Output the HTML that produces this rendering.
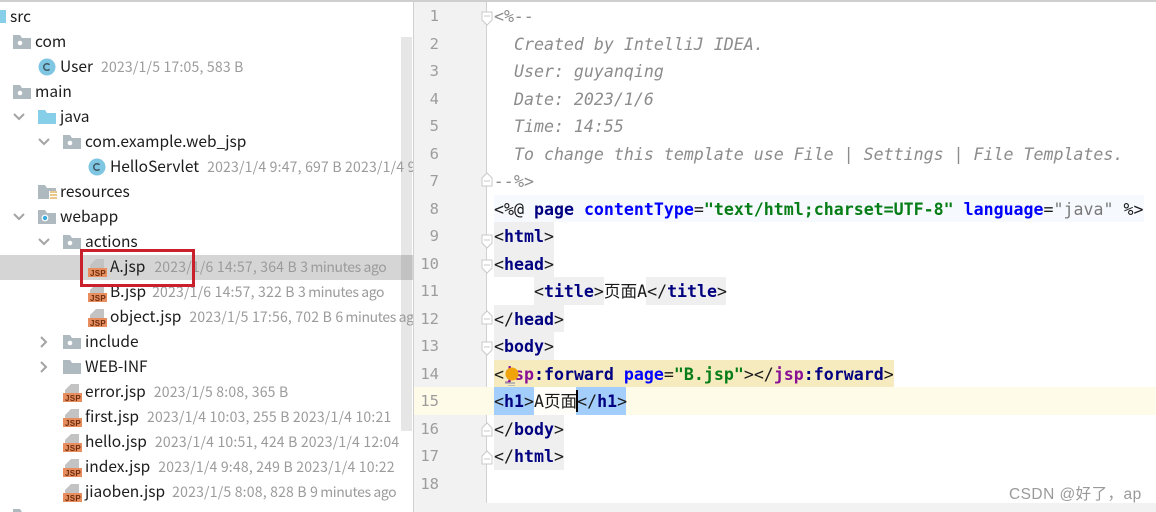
<!DOCTYPE html>
<html lang="zh">
<head>
<meta charset="utf-8">
<title>A.jsp</title>
<style>
html,body{margin:0;padding:0;background:#fff}
body{position:relative;width:1156px;height:512px;overflow:hidden}
.b{position:absolute}
.r{position:absolute;height:25px;line-height:25px;white-space:nowrap;font-family:"Noto Sans CJK SC","Liberation Sans",sans-serif;font-size:15.5px;color:#1c1c1c}
.r i{font-style:normal;color:#9b9b9b;font-size:14px;letter-spacing:.2px;margin-left:8px}
.r i u{text-decoration:none;letter-spacing:-.4px}
.ic{position:absolute}
.l{position:absolute;left:494px;height:27.5px;line-height:27.5px;white-space:pre;font-family:"DejaVu Sans Mono","Noto Sans CJK SC",monospace;font-size:16.6px;color:#1a1a1a}
.n{position:absolute;left:414px;width:25px;text-align:right;height:27.5px;line-height:27.5px;font-family:"DejaVu Sans Mono",monospace;font-size:15.5px;color:#9d9d9d}
.c{font-style:italic;color:#8c8c8c}
.t{color:#000080;font-weight:bold}
.a{color:#0000ff;font-weight:bold}
.s{color:#067d17;font-weight:bold}
.q{color:#7a7a7a}
.p{color:#871094;font-weight:bold}
</style>
</head>
<body>
<!-- panels -->
<div class="b" style="left:0;top:0;width:1156px;height:2px;background:#cfcfcf"></div>
<div class="b" style="left:401px;top:37px;width:11px;height:394px;background:#e6e6e6"></div>
<div class="b" style="left:413px;top:2px;width:1px;height:510px;background:#d0d0d0"></div>
<div class="b" style="left:414px;top:2px;width:72px;height:510px;background:#f2f2f2"></div>
<div class="b" style="left:486px;top:2px;width:1px;height:502px;background:#d0d0d0"></div>
<div class="b" style="left:414px;top:503px;width:742px;height:9px;background:#f2f2f2"></div>
<div class="b" style="left:0;top:255px;width:413px;height:25px;background:#d5d5d5"></div>
<div class="b" style="left:401px;top:255px;width:11px;height:25px;background:#c2c2c2"></div>

<!-- tree icons -->
<svg class="ic" style="left:0;top:0" width="413" height="512" viewBox="0 0 413 512">
  <!-- src -->
  <path d="M0 10h6v13H0z" fill="#87cfe8"/>
  <!-- package folders -->
  <g fill="#afb9c0">
    <path d="M13 35h7l2 3h9v11H13z"/>
    <path d="M13 85h7l2 3h9v11H13z"/>
    <path d="M63 135h7l2 3h9v11H63z"/>
    <path d="M63 235h7l2 3h9v11H63z"/>
    <path d="M63 335h7l2 3h9v11H63z"/>
    <path d="M63 360h7l2 3h9v11H63z"/>
    <path d="M38 185h7l2 3h9v11H38z"/>
    <path d="M38 210h7l2 3h9v11H38z"/>
  </g>
  <g fill="#fff">
    <circle cx="20" cy="43" r="2.3"/><circle cx="20" cy="93" r="2.3"/>
    <circle cx="70" cy="143" r="2.3"/><circle cx="70" cy="243" r="2.3"/><circle cx="70" cy="343" r="2.3"/>
  </g>
  <path d="M38 110h7l2 3h9v11H38z" fill="#87cfe8"/>
  <circle cx="45" cy="218" r="3.4" fill="#fff"/><circle cx="45" cy="218" r="2.2" fill="#3aa9dc"/>
  <path d="M49 191h8v9h-8z" fill="#fff"/>
  <path d="M50 192h7M50 195h7M50 198h7" stroke="#e3b564" stroke-width="1.6"/>
  <!-- classes -->
  <circle cx="47" cy="67" r="8.5" fill="#7fc6e2"/>
  <circle cx="97" cy="167" r="8.5" fill="#7fc6e2"/>
  <path d="M49.500 64.800a3.300 3.300 0 1 0 0 4.400M99.500 164.800a3.300 3.300 0 1 0 0 4.400" fill="none" stroke="#3f5560" stroke-width="1.500"/>
  <!-- chevrons -->
  <g fill="none" stroke="#a3a3a3" stroke-width="2">
    <path d="M14 114l5 5 5-5M14 214l5 5 5-5M39 139l5 5 5-5M39 239l5 5 5-5"/>
    <path d="M41 337l5 5-5 5M41 362l5 5-5 5"/>
  </g>
  <!-- jsp file sheets -->
  <g fill="#c3c3c3">
    <path d="M96 259h8v11H90v-5z"/><path d="M96 284h8v11H90v-5z"/><path d="M96 309h8v11H90v-5z"/>
    <path d="M71 384h8v11H65v-5z"/><path d="M71 409h8v11H65v-5z"/><path d="M71 434h8v11H65v-5z"/><path d="M71 459h8v11H65v-5z"/><path d="M71 484h8v11H65v-5z"/>
  </g>
  <g fill="#e88d5e">
    <rect x="88" y="268" width="19" height="9"/><rect x="88" y="293" width="19" height="9"/><rect x="88" y="318" width="19" height="9"/>
    <rect x="63" y="393" width="19" height="9"/><rect x="63" y="418" width="19" height="9"/><rect x="63" y="443" width="19" height="9"/><rect x="63" y="468" width="19" height="9"/><rect x="63" y="493" width="19" height="9"/>
  </g>
  <g font-family="Liberation Sans, sans-serif" font-size="8" font-weight="bold" fill="#6b2f10" letter-spacing=".3">
    <text x="90" y="276">JSP</text><text x="90" y="301">JSP</text><text x="90" y="326">JSP</text>
    <text x="65" y="401">JSP</text><text x="65" y="426">JSP</text><text x="65" y="451">JSP</text><text x="65" y="476">JSP</text><text x="65" y="501">JSP</text>
  </g>
  <path d="M13 512v-3h7l2 3z" fill="#afb9c0"/>
</svg>

<!-- tree labels -->
<div class="r" style="left:10px;top:4px">src</div>
<div class="r" style="left:35px;top:29px">com</div>
<div class="r" style="left:60px;top:54px">User<i>2023/1/5 17:05, 583 B</i></div>
<div class="r" style="left:35px;top:79px">main</div>
<div class="r" style="left:60px;top:104px">java</div>
<div class="r" style="left:85px;top:129px">com.example.web_jsp</div>
<div class="r" style="left:110px;top:154px;width:303px;overflow:hidden">HelloServlet<i>2023/1/4 9:47, 697 B 2023/1/4 9:47</i></div>
<div class="r" style="left:60px;top:179px">resources</div>
<div class="r" style="left:60px;top:204px">webapp</div>
<div class="r" style="left:85px;top:229px">actions</div>
<div class="r" style="left:110px;top:254px">A.jsp<i style="margin-left:9px">2023/1/6 14:57, 364 B <u>3 minutes ago</u></i></div>
<div class="r" style="left:110px;top:279px">B.jsp<i style="margin-left:6px">2023/1/6 14:57, 322 B <u>3 minutes ago</u></i></div>
<div class="r" style="left:110px;top:304px;width:303px;overflow:hidden">object.jsp<i>2023/1/5 17:56, 702 B <u>6 minutes ago</u></i></div>
<div class="r" style="left:85px;top:329px">include</div>
<div class="r" style="left:85px;top:354px">WEB-INF</div>
<div class="r" style="left:85px;top:379px">error.jsp<i>2023/1/5 8:08, 365 B</i></div>
<div class="r" style="left:85px;top:404px">first.jsp<i>2023/1/4 10:03, 255 B 2023/1/4 10:21</i></div>
<div class="r" style="left:85px;top:429px">hello.jsp<i>2023/1/4 10:51, 424 B 2023/1/4 12:04</i></div>
<div class="r" style="left:85px;top:454px">index.jsp<i>2023/1/4 9:48, 249 B 2023/1/4 10:22</i></div>
<div class="r" style="left:85px;top:479px">jiaoben.jsp<i style="margin-left:7px">2023/1/5 8:08, 828 B <u>9 minutes ago</u></i></div>

<!-- red box -->
<div class="b" style="left:80px;top:249px;width:109px;height:32px;border:3px solid #c9202c"></div>

<!-- editor backgrounds -->
<div class="b" style="left:414px;top:387px;width:742px;height:28px;background:#fffbe9"></div>
<div class="b" style="left:494px;top:195px;width:650px;height:27px;background:#f6f9fd"></div>
<div class="b" style="left:494px;top:222px;width:60px;height:28px;background:#efefef"></div>
<div class="b" style="left:494px;top:250px;width:60px;height:27px;background:#efefef"></div>
<div class="b" style="left:534px;top:277px;width:70px;height:28px;background:#efefef"></div>
<div class="b" style="left:646px;top:277px;width:80px;height:28px;background:#efefef"></div>
<div class="b" style="left:494px;top:305px;width:70px;height:27px;background:#efefef"></div>
<div class="b" style="left:494px;top:332px;width:60px;height:28px;background:#efefef"></div>
<div class="b" style="left:494px;top:360px;width:400px;height:27px;background:#f6eabf"></div>
<div class="b" style="left:494px;top:387px;width:40px;height:28px;background:#a3cdfb"></div>
<div class="b" style="left:534px;top:387px;width:43px;height:28px;background:#fffef8"></div>
<div class="b" style="left:576px;top:387px;width:50px;height:28px;background:#a3cdfb"></div>
<div class="b" style="left:494px;top:415px;width:70px;height:27px;background:#efefef"></div>
<div class="b" style="left:494px;top:442px;width:70px;height:28px;background:#efefef"></div>

<!-- line numbers -->
<div class="n" style="top:3px">1</div>
<div class="n" style="top:31px">2</div>
<div class="n" style="top:58px">3</div>
<div class="n" style="top:86px">4</div>
<div class="n" style="top:113px">5</div>
<div class="n" style="top:141px">6</div>
<div class="n" style="top:168px">7</div>
<div class="n" style="top:196px">8</div>
<div class="n" style="top:223px">9</div>
<div class="n" style="top:251px">10</div>
<div class="n" style="top:278px">11</div>
<div class="n" style="top:306px">12</div>
<div class="n" style="top:333px">13</div>
<div class="n" style="top:361px">14</div>
<div class="n" style="top:388px">15</div>
<div class="n" style="top:416px">16</div>
<div class="n" style="top:443px">17</div>
<div class="n" style="top:471px">18</div>

<!-- code -->
<div class="l c" style="top:3px">&lt;%--</div>
<div class="l c" style="top:31px">  Created by IntelliJ IDEA.</div>
<div class="l c" style="top:58px">  User: guyanqing</div>
<div class="l c" style="top:86px">  Date: 2023/1/6</div>
<div class="l c" style="top:113px">  Time: 14:55</div>
<div class="l c" style="top:141px">  To change this template use File | Settings | File Templates.</div>
<div class="l c" style="top:168px">--%&gt;</div>
<div class="l" style="top:196px">&lt;%@ <span class="t">page</span> <span class="a">contentType</span>=<span class="s">"text/html;charset=UTF-8"</span> <span class="a">language</span>=<span class="q">"java"</span> %&gt;</div>
<div class="l" style="top:223px">&lt;<span class="t">html</span>&gt;</div>
<div class="l" style="top:251px">&lt;<span class="t">head</span>&gt;</div>
<div class="l" style="top:278px">    &lt;<span class="t">title</span>&gt;页面A&lt;/<span class="t">title</span>&gt;</div>
<div class="l" style="top:306px">&lt;/<span class="t">head</span>&gt;</div>
<div class="l" style="top:333px">&lt;<span class="t">body</span>&gt;</div>
<div class="l" style="top:361px">&lt;<span class="p">jsp</span><span class="t">:forward</span> <span class="a">page</span>=<span class="s">"B.jsp"</span>&gt;&lt;/<span class="p">jsp</span><span class="t">:forward</span>&gt;</div>
<div class="l" style="top:388px">&lt;<span class="t">h1</span>&gt;A页面&lt;/<span class="t">h1</span>&gt;</div>
<div class="l" style="top:416px">&lt;/<span class="t">body</span>&gt;</div>
<div class="l" style="top:443px">&lt;/<span class="t">html</span>&gt;</div>

<!-- caret -->
<div class="b" style="left:576px;top:390px;width:2px;height:22px;background:#000"></div>

<!-- fold markers and bulb -->
<svg class="b" style="left:0;top:0" width="1156" height="512" viewBox="0 0 1156 512">
  <g fill="#fff" stroke="#c9c9c9" stroke-width="1">
    <path d="M482 12h10v8l-5 5-5-5z"/>
    <path d="M482 235h10v8l-5 5-5-5z"/>
    <path d="M482 260h10v8l-5 5-5-5z"/>
    <path d="M482 342h10v8l-5 5-5-5z"/>
    <path d="M482 186h10v-8l-5-5-5 5z"/>
    <path d="M482 324h10v-8l-5-5-5 5z"/>
    <path d="M482 436h10v-8l-5-5-5 5z"/>
    <path d="M482 464h10v-8l-5-5-5 5z"/>
  </g>
  <g stroke="#c9c9c9" stroke-width="1">
    <path d="M484 16h6M484 240h6M484 265h6M484 347h6M484 181h6M484 319h6M484 431h6M484 459h6"/>
  </g>
  <circle cx="512" cy="374" r="6.500" fill="#f0a30a"/>
  <path d="M505 383h10" stroke="#a8a8a8" stroke-width="1.500"/>
  <path d="M508 385.500h7" stroke="#bbb" stroke-width="1"/>
</svg>

<!-- watermark -->
<div class="b" style="left:1009px;top:484px;font-family:'Liberation Sans','Noto Sans CJK SC',sans-serif;font-size:15.500px;letter-spacing:.45px;line-height:22px;color:#9a9a9a;white-space:nowrap">CSDN @好了，ap</div>
</body>
</html>
